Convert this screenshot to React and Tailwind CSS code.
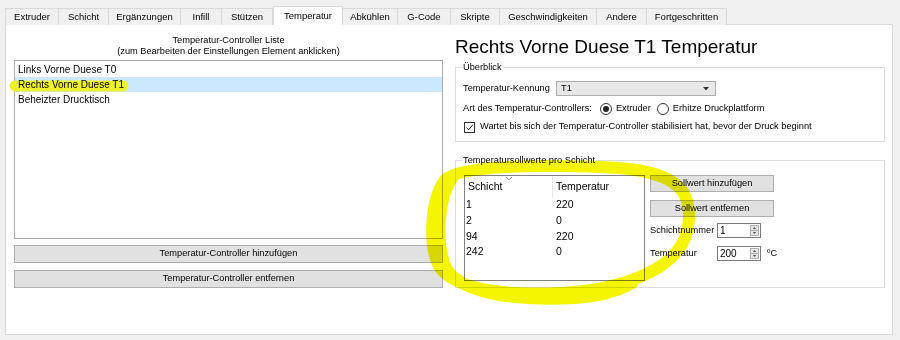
import React from "react";

const tabs = [
    ["Extruder", "w-[54px]"],
    ["Schicht", "w-[50px]"],
    ["Ergänzungen", "w-[72px]"],
    ["Infill", "w-[41px]"],
    ["Stützen", "w-[51px]"],
    ["Temperatur", "w-[70px]"],
    ["Abkühlen", "w-[55px]"],
    ["G-Code", "w-[53px]"],
    ["Skripte", "w-[49px]"],
    ["Geschwindigkeiten", "w-[97px]"],
    ["Andere", "w-[50px]"],
    ["Fortgeschritten", "w-[80px]"],
];

const controllers = ["Links Vorne Duese T0", "Rechts Vorne Duese T1", "Beheizter Drucktisch"];

const setpoints = [
    ["1", "220"],
    ["2", "0"],
    ["94", "220"],
    ["242", "0"],
];

// Small widgets
const Button = ({ children, className = "" }) => (
    <div className={`flex items-center justify-center bg-[#e1e1e1] border border-[#adadad] ${className}`}>
        {children}
    </div>
);

const Radio = ({ checked }) => (
    <span className="flex items-center justify-center w-[12px] h-[12px] rounded-full border border-[#333] bg-white">
        {checked && <span className="w-[6px] h-[6px] rounded-full bg-[#222]" />}
    </span>
);

const SpinBox = ({ value }) => (
    <div className="flex w-[44px] h-[15px] border border-[#7a7a7a] bg-white">
        <span className="flex-1 pl-[2px] leading-[13px] text-[10px]">{value}</span>
        <span className="flex flex-col w-[9px] my-[1px] mr-[1px] bg-[#e5e5e5] border border-[#b0b0b0]">
            <svg width="7" height="5" viewBox="0 0 7 5" className="flex-1">
                <path d="M1.5 3.5 L3.5 1.5 L5.5 3.5 Z" fill="#222" />
            </svg>
            <span className="h-px bg-[#b0b0b0]" />
            <svg width="7" height="5" viewBox="0 0 7 5" className="flex-1">
                <path d="M1.5 1.5 L3.5 3.5 L5.5 1.5 Z" fill="#222" />
            </svg>
        </span>
    </div>
);

const Group = ({ title, className = "", bodyClass = "", children }) => (
    <fieldset className={`border border-[#dcdcdc] ${className}`}>
        <legend className="ml-[6px] px-[1px] leading-[11px]">{title}</legend>
        <div className={bodyClass}>{children}</div>
    </fieldset>
);

export default function App() {
    return (
        <div className="relative w-[900px] h-[340px] overflow-hidden bg-[#f0f0f0] text-[9.25px] text-black font-['Liberation_Sans',Arial,sans-serif]">
            {/* Tab bar */}
            <div className="flex items-end h-[25px] pl-[5px] pt-[6px] text-[9.5px]">
                {tabs.map(([label, w], i) => {
                    const active = label === "Temperatur";
                    return (
                        <div
                            key={label}
                            className={`${w} flex items-center justify-center border-t border-r border-[#d9d9d9] ${
                                i === 0 ? "border-l" : ""
                            } ${active ? "relative z-10 h-[19px] bg-white border-l" : "h-[17px] bg-[#f0f0f0]"}`}
                        >
                            {label}
                        </div>
                    );
                })}
            </div>

            {/* Page */}
            <div className="ml-[5px] -mt-px w-[888px] h-[311px] bg-white border border-[#d9d9d9] flex pl-[8px] gap-[12px]">
                {/* Controller list */}
                <div className="w-[429px] pt-[10px] flex flex-col">
                    <p className="text-center leading-[11px]">Temperatur-Controller Liste</p>
                    <p className="text-center leading-[11px]">(zum Bearbeiten der Einstellungen Element anklicken)</p>
                    <div className="mt-[3px] h-[179px] border border-[#ababab] pt-px text-[10px]">
                        {controllers.map((c, i) => (
                            <div key={c} className={`h-[15px] leading-[15px] pl-[3px] ${i === 1 ? "bg-[#cce8ff]" : ""}`}>
                                <span className="relative z-20">{c}</span>
                            </div>
                        ))}
                    </div>
                    <Button className="mt-[6px] h-[18px]">Temperatur-Controller hinzufügen</Button>
                    <Button className="mt-[7px] h-[18px]">Temperatur-Controller entfernen</Button>
                </div>

                {/* Details */}
                <div className="w-[430px] pt-[10px] flex flex-col">
                    <h1 className="text-[19px] leading-[24px]">Rechts Vorne Duese T1 Temperatur</h1>

                    <Group title="Überblick" className="mt-[3px] h-[80px]" bodyClass="px-[7px]">
                        <div className="mt-[8px] h-[15px] flex items-center">
                            <span className="w-[93px]">Temperatur-Kennung</span>
                            <div className="w-[160px] h-[15px] flex items-center justify-between bg-[#e8e8e8] border border-[#adadad] pl-[4px] pr-[6px]">
                                <span>T1</span>
                                <svg width="6" height="4" viewBox="0 0 6 4">
                                    <path d="M0 0 L6 0 L3 3.5 Z" fill="#333" />
                                </svg>
                            </div>
                        </div>
                        <div className="mt-[5px] h-[15px] flex items-center">
                            <span>Art des Temperatur-Controllers:</span>
                            <span className="ml-[8px]"><Radio checked /></span>
                            <span className="ml-[4px]">Extruder</span>
                            <span className="ml-[6px]"><Radio /></span>
                            <span className="ml-[4px]">Erhitze Druckplattform</span>
                        </div>
                        <div className="mt-[4px] h-[14px] flex items-center">
                            <span className="flex items-center justify-center w-[11px] h-[11px] border border-[#333] bg-white ml-px">
                                <svg width="9" height="9" viewBox="0 0 9 9">
                                    <path d="M1.5 4.5 L3.6 6.7 L7.8 1.8" fill="none" stroke="#222" strokeWidth="1" />
                                </svg>
                            </span>
                            <span className="ml-[5px]">Wartet bis sich der Temperatur-Controller stabilisiert hat, bevor der Druck beginnt</span>
                        </div>
                    </Group>

                    <Group title="Temperatursollwerte pro Schicht" className="mt-[13px] h-[133px]" bodyClass="px-[8px]">
                        <div className="mt-[9px] flex gap-[5px]">
                            <div className="w-[181px] h-[106px] border border-[#828282] text-[10.5px]">
                                <div className="relative flex h-[21.5px] items-center">
                                    <span className="w-[87px] pl-[3px]">Schicht</span>
                                    <span className="w-px h-full bg-[#e8e8e8]" />
                                    <span className="pl-[3px]">Temperatur</span>
                                    <svg width="8" height="5" viewBox="0 0 8 5" className="absolute left-[40px] top-0">
                                        <path d="M1 1 L4 4 L7 1" fill="none" stroke="#999" strokeWidth="1" />
                                    </svg>
                                </div>
                                {setpoints.map(([layer, temp]) => (
                                    <div key={layer} className="flex h-[15.6px] items-center">
                                        <span className="w-[91px] pl-px">{layer}</span>
                                        <span>{temp}</span>
                                    </div>
                                ))}
                            </div>
                            <div className="flex flex-col">
                                <Button className="w-[124px] h-[17px]">Sollwert hinzufügen</Button>
                                <Button className="mt-[8px] w-[124px] h-[17px]">Sollwert entfernen</Button>
                                <div className="mt-[6px] flex items-center">
                                    <span className="w-[67px]">Schichtnummer</span>
                                    <SpinBox value="1" />
                                </div>
                                <div className="mt-[8px] flex items-center">
                                    <span className="w-[67px]">Temperatur</span>
                                    <SpinBox value="200" />
                                    <span className="ml-[6px]">ºC</span>
                                </div>
                            </div>
                        </div>
                    </Group>
                </div>
            </div>

            {/* Marker under the selected list entry */}
            <svg width="900" height="340" className="absolute inset-0 z-10 pointer-events-none">
                <path d="M15 86 L123 86" stroke="#eef22a" strokeWidth="11" strokeLinecap="round" />
            </svg>

            {/* Highlighter ring around the setpoint table */}
            <svg width="900" height="340" className="absolute inset-0 z-30 pointer-events-none mix-blend-multiply">
                <g fill="none" stroke="#f5f500" strokeWidth="12" strokeLinecap="round" strokeLinejoin="round">
                    <path d="M600 167 C640 168 670 174 683 192 C693 208 690 235 678 250 C662 272 620 290 560 293 C500 296 455 288 440 268 C428 248 430 200 445 180 C460 165 540 165 600 167 Z" />
                    <path d="M452 178 C437 200 436 248 447 270 C465 295 520 301 575 298 C600 296 620 290 632 283" />
                </g>
            </svg>
        </div>
    );
}
